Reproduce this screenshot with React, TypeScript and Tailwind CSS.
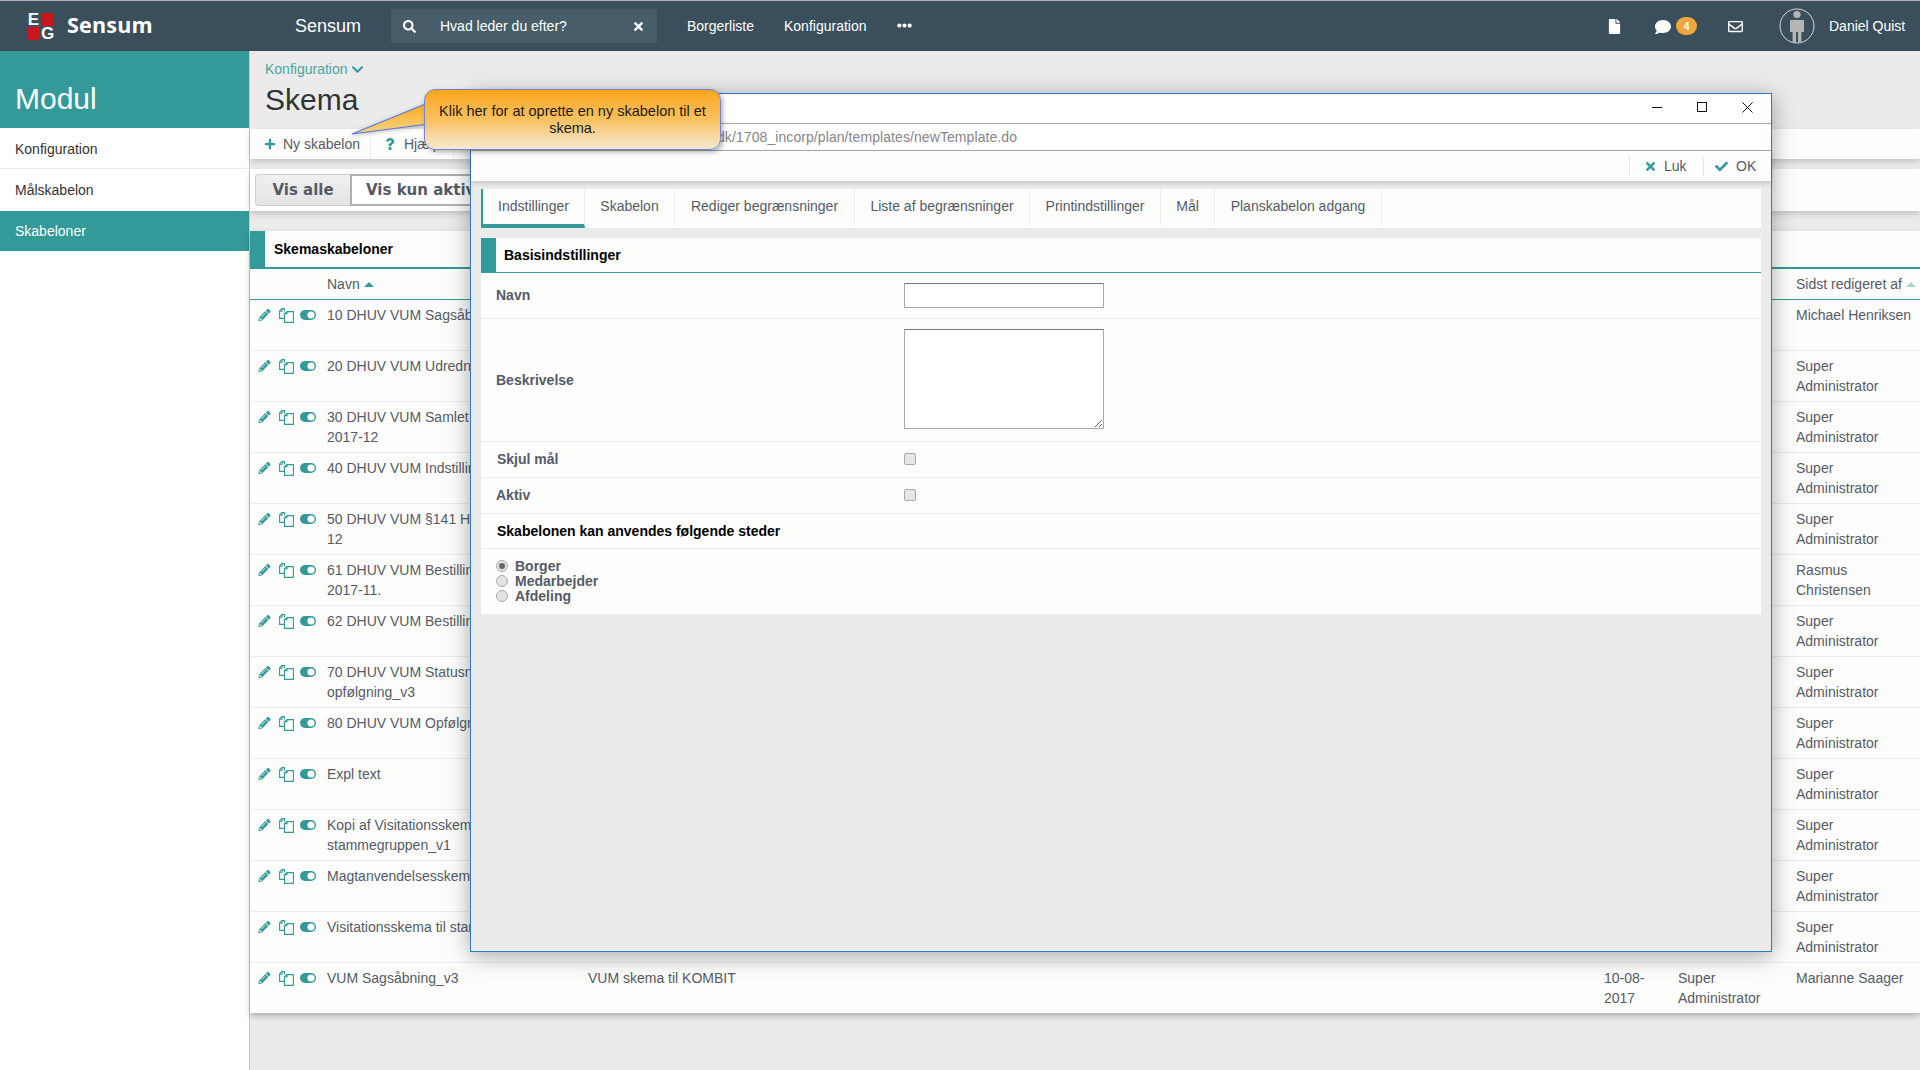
import React from "react";
import {
  FaPencilAlt, FaSearch, FaTimes, FaCheck, FaPlus, FaQuestion, FaChevronDown,
  FaFile, FaComment, FaRegEnvelope, FaEllipsisH,
} from "react-icons/fa";

const rows: { name: string[]; desc?: string; date?: string; by?: string; last: string[] }[] = [
  { name: ["10 DHUV VUM Sagsåbning_v3"], last: ["Michael Henriksen"] },
  { name: ["20 DHUV VUM Udredning_v3"], last: ["Super", "Administrator"] },
  { name: ["30 DHUV VUM Samlet vurdering", "2017-12"], last: ["Super", "Administrator"] },
  { name: ["40 DHUV VUM Indstilling_v3"], last: ["Super", "Administrator"] },
  { name: ["50 DHUV VUM §141 Handleplan", "12"], last: ["Super", "Administrator"] },
  { name: ["61 DHUV VUM Bestilling", "2017-11."], last: ["Rasmus", "Christensen"] },
  { name: ["62 DHUV VUM Bestilling_v3"], last: ["Super", "Administrator"] },
  { name: ["70 DHUV VUM Statusnotat", "opfølgning_v3"], last: ["Super", "Administrator"] },
  { name: ["80 DHUV VUM Opfølgning_v3"], last: ["Super", "Administrator"] },
  { name: ["Expl text"], last: ["Super", "Administrator"] },
  { name: ["Kopi af Visitationsskema", "stammegruppen_v1"], last: ["Super", "Administrator"] },
  { name: ["Magtanvendelsesskema"], last: ["Super", "Administrator"] },
  { name: ["Visitationsskema til stamgruppen"], last: ["Super", "Administrator"] },
  {
    name: ["VUM Sagsåbning_v3"],
    desc: "VUM skema til KOMBIT",
    date: "10-08-2017",
    by: "Super Administrator",
    last: ["Marianne Saager"],
  },
];

const tabs = [
  { label: "Indstillinger", w: "w-[104px]" },
  { label: "Skabelon", w: "w-[90px]" },
  { label: "Rediger begrænsninger", w: "w-[180px]" },
  { label: "Liste af begrænsninger", w: "w-[175px]" },
  { label: "Printindstillinger", w: "w-[131px]" },
  { label: "Mål", w: "w-[54px]" },
  { label: "Planskabelon adgang", w: "w-[167px]" },
];

function CopyIcon() {
  return (
    <svg width="15" height="15" viewBox="0 0 15 15" fill="none" stroke="#339a99" strokeWidth="1.1" className="shrink-0">
      <path d="M5.5 3.5V.6H2.8L.6 2.9V10.4H5.5" fill="#fdfdfb" />
      <path d="M.6 3.2H3V.8" />
      <path d="M5.5 5.6V14.4H14.4V3.6H8L5.5 5.8H8V3.8" fill="#fdfdfb" />
    </svg>
  );
}

function ToggleIcon() {
  return (
    <svg width="16" height="10" viewBox="0 0 16 10" className="shrink-0">
      <rect x="0" y="0" width="16" height="10" rx="5" fill="#339a99" />
      <circle cx="11" cy="5" r="3.6" fill="#fdfdfb" />
    </svg>
  );
}

function Person() {
  return (
    <svg width="36" height="36" viewBox="0 0 36 36" className="shrink-0">
      <circle cx="18" cy="18" r="17" fill="none" stroke="#d5d9dc" strokeWidth="1" />
      <circle cx="18" cy="6.5" r="3.6" fill="#b5b5b5" />
      <path d="M11 12h14v12h-2.6v10h-3.4v-10h-2v10h-3.4v-10H11z" fill="#b5b5b5" />
    </svg>
  );
}

export default function App() {
  return (
    <div className="relative w-[1920px] h-[1070px] overflow-hidden bg-[#ebebeb] font-['Liberation_Sans',Arial,sans-serif] text-[14px] text-[#555b66]">
      <div className="h-px bg-[#b0b0b0]" />
      {/* Top bar */}
      <header className="h-[50px] bg-[#3a4f5b] flex items-center text-white">
        <div className="w-[295px] flex items-center shrink-0">
          <div className="ml-[27px] grid grid-cols-[13px_13px] grid-rows-[13px_13px] gap-px mt-[1px]">
            <span className="flex items-center justify-center font-bold text-[17px] leading-none text-white">E</span>
            <span className="bg-[#c8161d]" />
            <span className="bg-[#c8161d]" />
            <span className="flex items-center justify-center font-bold text-[17px] leading-none text-white">G</span>
          </div>
          <span className="ml-[13px] -mt-[2px] font-['Open_Sans',sans-serif] font-bold text-[21.5px] leading-none tracking-[0.2px]">Sensum</span>
        </div>
        <span className="text-[18px] w-[96px] shrink-0 mt-[1px]">Sensum</span>
        <div className="w-[266px] h-[34px] bg-[#475d69] rounded-[2px] flex items-center shrink-0 pl-[12px] pr-[12px]">
          <FaSearch className="text-[13px]" />
          <span className="ml-[24px] flex-1">Hvad leder du efter?</span>
          <FaTimes className="text-[13px]" />
        </div>
        <nav className="ml-[30px] flex items-center w-[920px] shrink-0">
          <span className="w-[97px]">Borgerliste</span>
          <span className="w-[113px]">Konfiguration</span>
          <FaEllipsisH className="text-[15px] -mt-[2px]" />
        </nav>
        <FaFile className="text-[15px]" />
        <FaComment className="text-[16px] ml-[33px] mt-[1px]" />
        <span className="ml-[5px] w-[21px] h-[18px] rounded-[9px] bg-[#f0a63c] text-[11px] font-bold flex items-center justify-center">4</span>
        <FaRegEnvelope className="text-[15px] ml-[31px]" />
        <div className="ml-[36px]"><Person /></div>
        <span className="ml-[14px]">Daniel Quist</span>
      </header>

      <div className="flex h-[1019px]">
        {/* Sidebar */}
        <aside className="w-[250px] shrink-0 bg-white border-r border-[#c9c9c9]">
          <div className="h-[77px] bg-[#339a99] text-white text-[30px] flex items-center pl-[15px] pt-[18px]">Modul</div>
          <div className="h-[41px] flex items-center pl-[15px] pt-[2px] text-[#333] border-b border-[#eeeeee]">Konfiguration</div>
          <div className="h-[42px] flex items-center pl-[15px] text-[#333]">Målskabelon</div>
          <div className="h-[40px] flex items-center pl-[15px] bg-[#339a99] text-white">Skabeloner</div>
        </aside>

        {/* Main */}
        <main className="flex-1 min-w-0">
          <div className="h-[78px] pl-[15px] pt-[10px]">
            <div className="flex items-center gap-[3px] text-[#4aa5a4] leading-[16px]">
              Konfiguration <FaChevronDown className="text-[13px] text-[#339a99] mt-[1px]" />
            </div>
            <div className="text-[30px] leading-[36px] text-[#333] mt-[5px]">Skema</div>
          </div>

          <div className="h-[30px] bg-[#fdfdfb] shadow-[0_3px_6px_rgba(0,0,0,0.16)] flex items-center pl-[14px]">
            <FaPlus className="text-[#339a99] text-[12px]" />
            <span className="ml-[7px] w-[87px]">Ny skabelon</span>
            <span className="w-px h-[30px] bg-[#eeeeee]" />
            <FaQuestion className="text-[#339a99] text-[12px] ml-[13px]" />
            <span className="ml-[8px] w-[49px]">Hjælp</span>
            <span className="w-px h-[30px] bg-[#eeeeee]" />
          </div>

          <div className="mt-[10px] h-[42px] bg-[#fdfdfb] shadow-[0_3px_6px_rgba(0,0,0,0.16)] flex items-center pl-[5px]">
            <div className="h-[32px] w-[95px] pt-[1px] border border-[#cfcfcf] border-r-0 rounded-l-[4px] bg-gradient-to-b from-[#f0f0f0] to-[#e4e4e4] font-['DejaVu_Sans',sans-serif] font-bold text-[15px] flex items-center justify-center">Vis alle</div>
            <div className="h-[32px] pl-[14px] pr-[15px] pt-[1px] border-2 border-[#b0b0b0] bg-white font-['DejaVu_Sans',sans-serif] font-bold text-[15px] flex items-center">Vis kun aktive</div>
          </div>

          {/* Table */}
          <section className="mt-[20px] bg-[#fdfdfb] shadow-[0_3px_6px_rgba(0,0,0,0.25)]">
            <div className="h-[38px] flex border-b-[2px] border-[#339a99]">
              <div className="w-[15px] bg-[#339a99]" />
              <div className="pl-[9px] flex items-center font-bold text-[14px] text-black">Skemaskabeloner</div>
            </div>
            <div className="h-[31px] grid grid-cols-[77px_1469px_1fr] items-center border-b border-[#339a99]">
              <span />
              <span className="flex items-center gap-[4px]">
                Navn
                <span className="w-0 h-0 border-x-[5px] border-x-transparent border-b-[5px] border-b-[#339a99]" />
              </span>
              <span className="flex items-center gap-[4px] whitespace-nowrap">
                Sidst redigeret af
                <span className="w-0 h-0 border-x-[5px] border-x-transparent border-b-[5px] border-b-[#a8d5d4]" />
              </span>
            </div>
            {rows.map((r, i) => (
              <div
                key={i}
                className={`grid grid-cols-[77px_261px_1016px_74px_118px_1fr] leading-[20px] pt-[5px] ${i < rows.length - 1 ? "h-[51px] border-b border-[#ebebeb]" : "h-[50px]"}`}
              >
                <div className="flex items-start pl-[8px] pt-[4px]">
                  <FaPencilAlt className="text-[#339a99] text-[12px] w-[13px]" />
                  <span className="ml-[8px] -mt-[1px]"><CopyIcon /></span>
                  <span className="ml-[6px] mt-[1px]"><ToggleIcon /></span>
                </div>
                <div className="whitespace-nowrap">
                  {r.name.map((l) => (
                    <div key={l}>{l}</div>
                  ))}
                </div>
                <div>{r.desc}</div>
                <div className="pr-[8px]">{r.date}</div>
                <div className="pr-[8px]">{r.by}</div>
                <div className="whitespace-nowrap">
                  {r.last.map((l) => (
                    <div key={l}>{l}</div>
                  ))}
                </div>
              </div>
            ))}
          </section>
        </main>
      </div>

      {/* Modal window */}
      <div className="absolute left-[470px] top-[93px] w-[1302px] h-[859px] border border-[#2a7bc4] bg-[#ebebeb] shadow-[0_4px_22px_rgba(0,0,0,0.35)] flex flex-col">
        <div className="h-[26px] pb-[3px] bg-white border-b border-[#aaaaaa] flex items-center justify-end shrink-0 box-content">
          <svg width="10" height="10" viewBox="0 0 10 10" className="mr-[35px]"><path d="M0 5.5h10" stroke="#111" strokeWidth="1" /></svg>
          <svg width="10" height="10" viewBox="0 0 10 10" className="mr-[35px]"><rect x=".5" y=".5" width="9" height="9" fill="none" stroke="#111" strokeWidth="1" /></svg>
          <svg width="11" height="11" viewBox="0 0 11 11" className="mr-[18px]"><path d="M.5.5l10 10M10.5.5l-10 10" stroke="#111" strokeWidth="1" /></svg>
        </div>
        <div className="h-[26px] bg-white border-b border-[#aaaaaa] flex items-center pl-[246px] text-[14px] tracking-[0.08px] text-[#868686] shrink-0 box-content">dk/1708_incorp/plan/templates/newTemplate.do</div>
        <div className="h-[30px] bg-[#fdfdfb] shadow-[0_2px_5px_rgba(0,0,0,0.18)] flex items-center justify-end shrink-0">
          <span className="w-px h-[20px] bg-[#e8e8e8]" />
          <div className="w-[73px] flex items-center pl-[14px]">
            <FaTimes className="text-[#339a99] text-[13px]" />
            <span className="ml-[7px]">Luk</span>
          </div>
          <span className="w-px h-[20px] bg-[#e8e8e8]" />
          <div className="w-[67px] flex items-center pl-[11px]">
            <FaCheck className="text-[#339a99] text-[13px]" />
            <span className="ml-[8px]">OK</span>
          </div>
        </div>

        <div className="px-[10px] pt-[8px] flex-1">
          <div className="h-[39px] bg-[#fdfdfb] flex">
            {tabs.map((t, i) => (
              <div
                key={t.label}
                className={`${t.w} shrink-0 flex items-center justify-center border-r border-[#eeeeee] border-b-[4px] ${i === 0 ? "border-l-2 border-l-[#339a99] border-b-[#339a99]" : "border-b-transparent"}`}
              >
                {t.label}
              </div>
            ))}
          </div>

          <div className="mt-[10px] bg-[#fdfdfb]">
            <div className="h-[35px] flex border-b border-[#339a99]">
              <div className="w-[15px] bg-[#339a99]" />
              <div className="pl-[8px] flex items-center font-bold text-black">Basisindstillinger</div>
            </div>
            <div className="h-[46px] grid grid-cols-[408px_1fr] items-center border-b border-[#ebebeb] pl-[15px] font-bold">
              <span>Navn</span>
              <input className="w-[200px] h-[25px] bg-white border border-[#aaaaaa] border-t-[#777777] outline-none" />
            </div>
            <div className="h-[123px] grid grid-cols-[408px_1fr] items-center border-b border-[#ebebeb] pl-[15px] font-bold">
              <span>Beskrivelse</span>
              <textarea className="block w-[200px] h-[100px] -mt-[2px] bg-white border border-[#aaaaaa] border-t-[#777777] outline-none" />
            </div>
            <div className="h-[36px] grid grid-cols-[408px_1fr] items-center border-b border-[#ebebeb] pl-[15px] font-bold">
              <span className="pl-[1px]">Skjul mål</span>
              <input type="checkbox" className="w-[12px] h-[12px] -mt-[1px] appearance-none rounded-[2px] border border-[#a9a9a9] bg-[#e6e6e6]" />
            </div>
            <div className="h-[36px] grid grid-cols-[408px_1fr] items-center border-b border-[#ebebeb] pl-[15px] font-bold">
              <span>Aktiv</span>
              <input type="checkbox" className="w-[12px] h-[12px] -mt-[1px] appearance-none rounded-[2px] border border-[#a9a9a9] bg-[#e6e6e6]" />
            </div>
            <div className="h-[35px] flex items-center border-b border-[#ebebeb] pl-[16px] font-bold text-black">Skabelonen kan anvendes følgende steder</div>
            <div className="h-[65px] pl-[15px] pt-[10px] font-bold leading-[15px]">
              {["Borger", "Medarbejder", "Afdeling"].map((l, i) => (
                <div key={l} className="flex items-center h-[15px]">
                  <span className="w-[12px] h-[12px] -mt-[2px] rounded-full border border-[#a9a9a9] bg-[#e2e2e2] flex items-center justify-center shrink-0">
                    {i === 0 && <span className="w-[6px] h-[6px] rounded-full bg-[#666666]" />}
                  </span>
                  <span className="ml-[7px]">{l}</span>
                </div>
              ))}
            </div>
          </div>
        </div>
      </div>

      {/* Callout */}
      <svg width="80" height="60" viewBox="0 0 80 60" className="absolute left-[350px] top-[90px] overflow-visible drop-shadow-[0_1px_2px_rgba(0,0,0,0.25)]">
        <defs>
          <linearGradient id="tail" x1="0" y1="0" x2="0" y2="1">
            <stop offset="0" stopColor="#fcaa1a" />
            <stop offset="1" stopColor="#f6d48a" />
          </linearGradient>
        </defs>
        <path d="M78 13L2 44L78 34Z" fill="url(#tail)" stroke="#5f78d8" strokeWidth="1.2" />
      </svg>
      <div className="absolute left-[424px] top-[89px] w-[297px] h-[61px] rounded-[11px] border border-[#6f86d6] bg-gradient-to-b from-[#fca50f] via-[#f9c15d] to-[#f5e8d0] shadow-[2px_2px_5px_rgba(0,0,0,0.3)] text-[14.5px] leading-[17px] text-[#1a1a1a] text-center flex items-center justify-center px-[8px]">
        Klik her for at oprette en ny skabelon til et skema.
      </div>
    </div>
  );
}
